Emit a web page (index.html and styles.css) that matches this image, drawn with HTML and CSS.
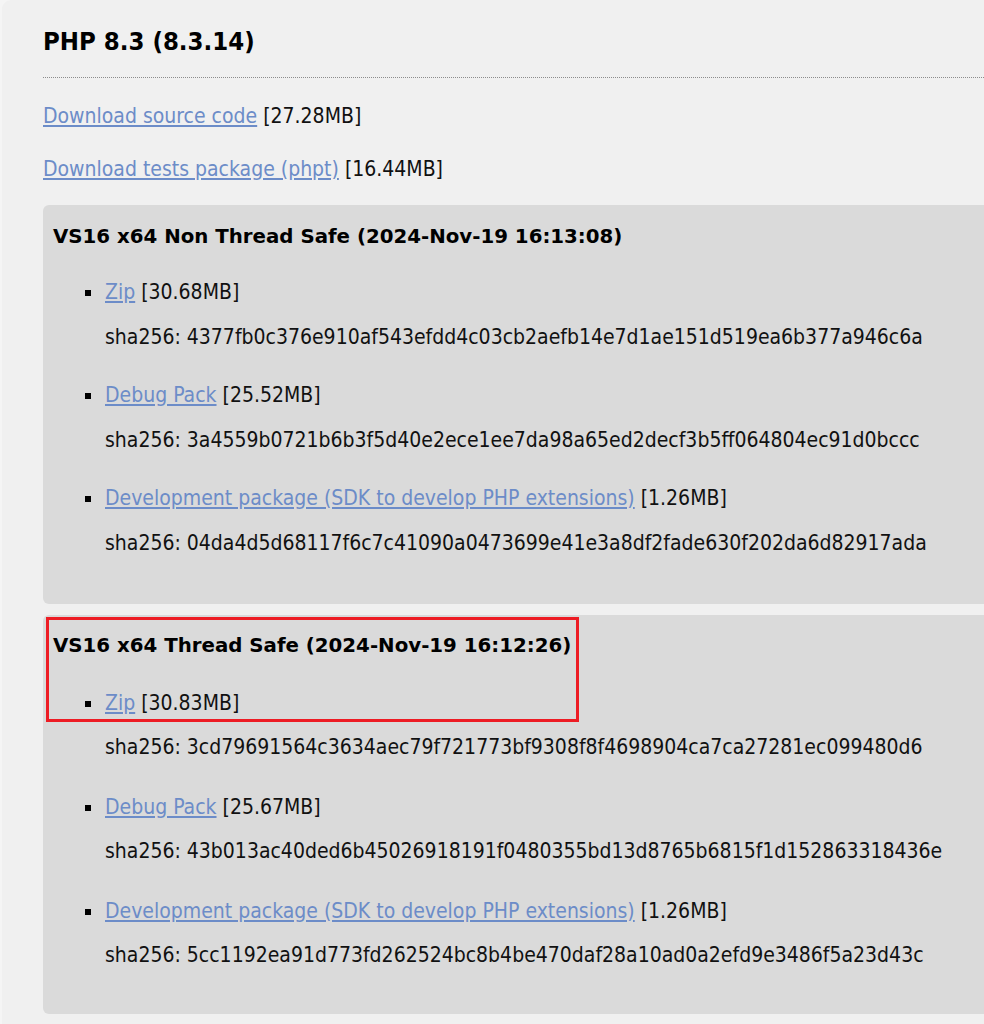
FILE: index.html
```html
<!DOCTYPE html>
<html lang="en">
<head>
<meta charset="utf-8">
<title>PHP 8.3 (8.3.14)</title>
<link rel="stylesheet" href="styles.css">
</head>
<body>
<div class="page">
  <h2 class="title">PHP 8.3 (8.3.14)</h2>
  <hr class="rule">
  <p class="dl"><a href="#">Download source code</a> [27.28MB]</p>
  <p class="dl"><a href="#">Download tests package (phpt)</a> [16.44MB]</p>

  <div class="build">
    <h3 class="build-title">VS16 x64 Non Thread Safe (2024-Nov-19 16:13:08)</h3>
    <ul class="files">
      <li><a href="#">Zip</a> [30.68MB]<span class="sha">sha256: 4377fb0c376e910af543efdd4c03cb2aefb14e7d1ae151d519ea6b377a946c6a</span></li>
      <li><a href="#">Debug Pack</a> [25.52MB]<span class="sha">sha256: 3a4559b0721b6b3f5d40e2ece1ee7da98a65ed2decf3b5ff064804ec91d0bccc</span></li>
      <li><a href="#">Development package (SDK to develop PHP extensions)</a> [1.26MB]<span class="sha">sha256: 04da4d5d68117f6c7c41090a0473699e41e3a8df2fade630f202da6d82917ada</span></li>
    </ul>
  </div>

  <div class="build build-second">
    <div class="highlight"></div>
    <h3 class="build-title">VS16 x64 Thread Safe (2024-Nov-19 16:12:26)</h3>
    <ul class="files">
      <li><a href="#">Zip</a> [30.83MB]<span class="sha">sha256: 3cd79691564c3634aec79f721773bf9308f8f4698904ca7ca27281ec099480d6</span></li>
      <li><a href="#">Debug Pack</a> [25.67MB]<span class="sha">sha256: 43b013ac40ded6b45026918191f0480355bd13d8765b6815f1d152863318436e</span></li>
      <li><a href="#">Development package (SDK to develop PHP extensions)</a> [1.26MB]<span class="sha">sha256: 5cc1192ea91d773fd262524bc8b4be470daf28a10ad0a2efd9e3486f5a23d43c</span></li>
    </ul>
  </div>
</div>
</body>
</html>
```
FILE: styles.css
```css
html, body {
  margin: 0;
  padding: 0;
}
body {
  background: #f5f5f5;
  color: #111;
  font-family: "DejaVu Sans Condensed", "DejaVu Sans", sans-serif;
  font-stretch: condensed;
  font-size: 21px;
  line-height: 24px;
  overflow: hidden;
  width: 984px;
  height: 1024px;
}
.page {
  margin-left: 2px;
  background: #f0f0f0;
  border-top-left-radius: 9px;
  padding: 26px 0 0 41px;
  height: 1024px;
  box-sizing: border-box;
}
.title {
  margin: 0;
  font-size: 25.5px;
  line-height: 30px;
  font-weight: bold;
  color: #000;
}
.rule {
  margin: 21px -40px 0 0;
  border: 0;
  border-top: 1px dotted #8c8c8c;
  height: 0;
}
.dl {
  margin: 26px 0 0;
}
.dl + .dl {
  margin-top: 29px;
}
a {
  color: #6c8cc8;
  text-decoration: underline;
}
.build {
  position: relative;
  margin: 24px -40px 0 0;
  background: #dadada;
  border-radius: 6px;
  padding: 20px 10px 49px 10px;
}
.build-second {
  margin-top: 11px;
  padding-top: 19px;
  padding-bottom: 47px;
}
.build-title {
  margin: 0;
  font-family: "DejaVu Sans", sans-serif;
  font-stretch: normal;
  font-size: 19.8px;
  line-height: 24px;
  font-weight: bold;
  color: #000;
}
.files {
  list-style: none;
  margin: 31px 0 0;
  padding: 0 0 0 52px;
}
.build-second .files {
  margin-top: 33px;
}
.files li {
  position: relative;
}
.files li + li {
  margin-top: 34px;
}
.build-second .files li + li {
  margin-top: 36px;
}
.files li::before {
  content: "";
  position: absolute;
  left: -20px;
  top: 10px;
  width: 6px;
  height: 6px;
  background: #000;
}
.sha {
  display: block;
  margin-top: 21px;
}
.build-second .sha {
  margin-top: 20px;
}
.highlight {
  position: absolute;
  left: 3px;
  top: 2px;
  width: 533px;
  height: 105px;
  box-sizing: border-box;
  border: 3px solid #ed1c24;
  pointer-events: none;
}
```
